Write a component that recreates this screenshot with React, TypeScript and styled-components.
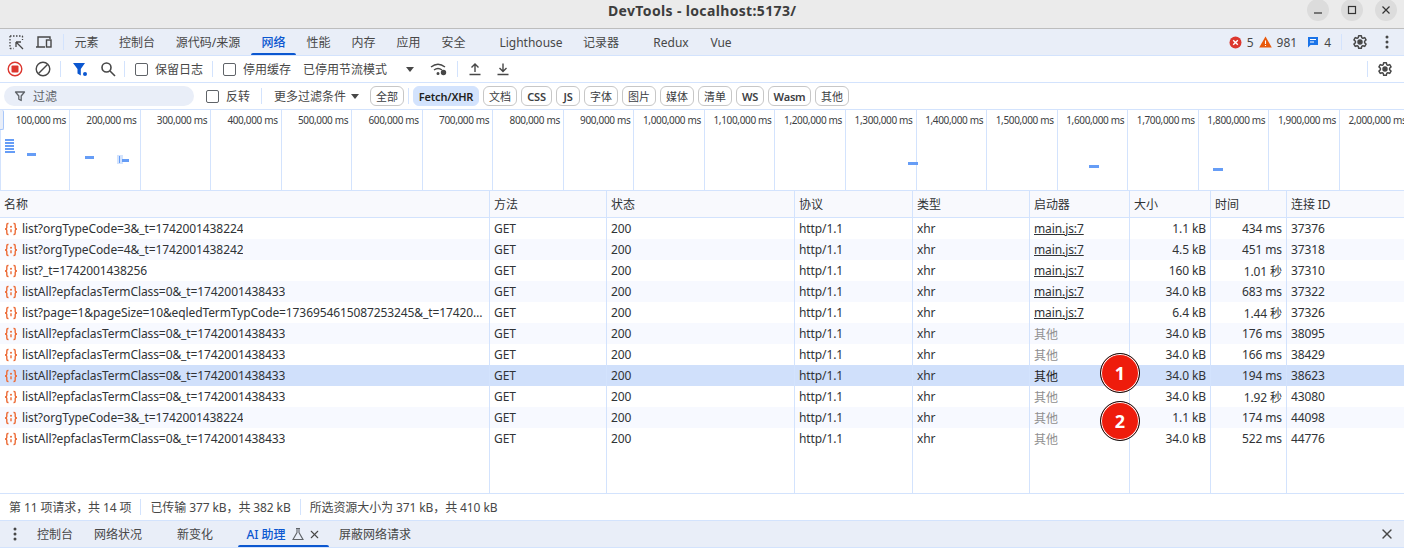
import React from 'react';
import styled, { createGlobalStyle } from 'styled-components';
import { X } from 'lucide-react';

const GlobalStyle = createGlobalStyle`
  html, body {
    margin: 0;
    padding: 0;
    background: #fff;
  }
  body {
    font-family: "Noto Sans", "Noto Sans CJK SC", sans-serif;
    font-size: 12px;
    color: #3c4043;
    overflow: hidden;
  }
`;

const COLUMNS = '490px 117px 188px 118px 117px 100px 81px 76px 1fr';
const LINE = '#d3e3fd';

const Window = styled.div`
  position: relative;
  width: 1404px;
  height: 551px;
  padding-bottom: 3px;
  box-sizing: border-box;
  display: flex;
  flex-direction: column;
  background: #fff;
  overflow: hidden;
`;

const TitleBar = styled.header`
  height: 28px;
  flex: none;
  display: flex;
  align-items: center;
  justify-content: flex-end;
  padding-right: 7px;
  gap: 12px;
  background: #ebebeb;
  border-bottom: 1px solid #bdbdbd;
  position: relative;
`;

const Title = styled.div`
  position: absolute;
  left: 608px;
  top: 1px;
  font-size: 14px;
  font-weight: 700;
  color: #3d3d3d;
  line-height: 20px;
  letter-spacing: 0.35px;
`;

const WinButton = styled.div`
  width: 22px;
  height: 22px;
  margin-top: -9px;
  border-radius: 50%;
  background: #dcdcdc;
  display: flex;
  align-items: center;
  justify-content: center;
  color: #333;
`;

const Bar = styled.div<{ $bg?: string }>`
  height: 26px;
  flex: none;
  display: flex;
  align-items: center;
  background: ${(p) => p.$bg ?? '#fff'};
  border-bottom: 1px solid ${LINE};
  white-space: nowrap;
`;

const StatusBar = styled(Bar)`
  border-top: 1px solid ${LINE};
  letter-spacing: -0.1px;
`;

const Spacer = styled.div`
  flex: 1;
`;

const IconSlot = styled.div<{ $ml?: number; $w?: number }>`
  width: ${(p) => p.$w ?? 20}px;
  height: 20px;
  margin-left: ${(p) => p.$ml ?? 0}px;
  flex: none;
  display: flex;
  align-items: center;
  justify-content: center;
`;

const Sep = styled.div<{ $ml?: number }>`
  width: 1px;
  height: 16px;
  flex: none;
  margin-left: ${(p) => p.$ml ?? 0}px;
  background: ${LINE};
`;

const Tab = styled.div<{ $active?: boolean; $w: number; $ml?: number }>`
  position: relative;
  width: ${(p) => p.$w}px;
  margin-left: ${(p) => p.$ml ?? 0}px;
  flex: none;
  height: 100%;
  display: flex;
  align-items: center;
  justify-content: center;
  color: ${(p) => (p.$active ? '#0b57d0' : '#474747')};
  font-weight: ${(p) => (p.$active ? 500 : 400)};
  &::after {
    content: '';
    display: ${(p) => (p.$active ? 'block' : 'none')};
    position: absolute;
    left: 0;
    right: 0;
    bottom: 0;
    height: 2px;
    border-radius: 2px 2px 0 0;
    background: #0b57d0;
  }
`;

const Count = styled.span`
  margin-left: 4px;
  color: #474747;
`;

const CheckBox = styled.span<{ $ml?: number }>`
  display: block;
  width: 11px;
  height: 11px;
  flex: none;
  margin-left: ${(p) => p.$ml ?? 0}px;
  border: 1px solid #5f6368;
  border-radius: 2px;
`;

const Label = styled.span<{ $ml?: number }>`
  margin-left: ${(p) => p.$ml ?? 0}px;
  color: #474747;
  flex: none;
`;

const FilterInput = styled.div`
  width: 190px;
  height: 20px;
  margin-left: 4px;
  flex: none;
  display: flex;
  align-items: center;
  padding-left: 10px;
  box-sizing: border-box;
  gap: 7px;
  border-radius: 10px;
  background: #e9eef8;
  color: #5f6368;
`;

const Chips = styled.div`
  display: flex;
  align-items: center;
  gap: 4px;
  margin-left: 9px;
`;

const Chip = styled.div<{ $active?: boolean; $w: number; $bold?: boolean }>`
  box-sizing: border-box;
  width: ${(p) => p.$w}px;
  height: 20px;
  flex: none;
  display: flex;
  align-items: center;
  justify-content: center;
  border-radius: 6px;
  font-size: 11px;
  font-weight: ${(p) => (p.$bold ? 600 : 400)};
  letter-spacing: ${(p) => (p.$bold ? '-0.2px' : '0')};
  color: ${(p) => (p.$active ? '#1f1f1f' : '#3c4043')};
  background: ${(p) => (p.$active ? '#d3e3fd' : '#fff')};
  border: 1px solid ${(p) => (p.$active ? '#d3e3fd' : '#c7c7c7')};
`;

const Overview = styled.div`
  position: relative;
  height: 80px;
  flex: none;
  display: flex;
  border-bottom: 1px solid ${LINE};
  overflow: hidden;
`;

const Tick = styled.div`
  width: 70.55px;
  flex: none;
  box-sizing: border-box;
  height: 100%;
  padding: 2px 3px 0 0;
  border-right: 1px solid ${LINE};
  text-align: right;
  font-size: 10px;
  letter-spacing: -0.35px;
  line-height: 16px;
  color: #3c4043;
  white-space: nowrap;
  &:first-child {
    border-left: 1px solid ${LINE};
    width: 70px;
  }
`;

const Mark = styled.div<{ $x: number; $y: number; $w: number; $h?: number; $pale?: boolean }>`
  position: absolute;
  left: ${(p) => p.$x}px;
  top: ${(p) => p.$y}px;
  width: ${(p) => p.$w}px;
  height: ${(p) => p.$h ?? 3}px;
  background: ${(p) => (p.$pale ? '#d3e3fd' : '#669df6')};
`;

const Grip = styled.div`
  position: absolute;
  left: 0;
  top: 0;
  width: 3px;
  height: 19px;
  border-radius: 0 2px 2px 0;
  border-right: 1px solid #a8c7fa;
  border-bottom: 1px solid #a8c7fa;
  background: #e9eef8;
`;

const TableRow = styled.div<{ $kind?: 'odd' | 'even' | 'selected' }>`
  display: grid;
  grid-template-columns: ${COLUMNS};
  height: 21px;
  flex: none;
  background: ${(p) =>
    p.$kind === 'selected' ? '#d0e0fb' : p.$kind === 'even' ? '#f7f9ff' : '#fff'};
`;

const HeaderRow = styled(TableRow)`
  height: 26px;
  background: #f8f9fd;
  border-bottom: 1px solid ${LINE};
`;

const Filler = styled(TableRow)`
  flex: 1;
  height: auto;
`;

const Cell = styled.div<{ $right?: boolean; $dim?: boolean; $link?: boolean; $strong?: boolean }>`
  min-width: 0;
  display: flex;
  align-items: center;
  justify-content: ${(p) => (p.$right ? 'flex-end' : 'flex-start')};
  padding: 0 4px;
  box-sizing: border-box;
  border-right: 1px solid ${LINE};
  color: ${(p) => (p.$dim ? '#8f8f8f' : p.$strong ? '#1f1f1f' : '#303336')};
  text-decoration: ${(p) => (p.$link ? 'underline' : 'none')};
  letter-spacing: -0.1px;
  white-space: nowrap;
  overflow: hidden;
  &:last-child {
    border-right: none;
  }
`;

const NameText = styled.span`
  margin-left: 4px;
  min-width: 0;
  overflow: hidden;
  text-overflow: ellipsis;
`;

const Body = styled.div`
  flex: 1;
  min-height: 0;
  display: flex;
  flex-direction: column;
`;

const StatusItem = styled.div<{ $first?: boolean }>`
  height: 16px;
  display: flex;
  align-items: center;
  padding: 0 9px;
  color: #474747;
  border-left: ${(p) => (p.$first ? 'none' : `1px solid ${LINE}`)};
`;

const Badge = styled.div<{ $top: number }>`
  position: absolute;
  left: 1100px;
  top: ${(p) => p.$top}px;
  width: 40px;
  height: 40px;
  box-sizing: border-box;
  border-radius: 50%;
  background: #ee1c0c;
  border: 1px solid #111;
  box-shadow: inset 0 0 0 1px #fff;
  color: #fff;
  font-size: 18px;
  font-weight: 700;
  display: flex;
  align-items: center;
  justify-content: center;
`;

const FetchSvg = styled.svg`
  flex: none;
`;

const FlaskSvg = styled.svg`
  margin-left: 5px;
`;

const TabClose = styled(X)`
  margin-left: 3px;
`;

const Gear = ({ size = 16 }: { size?: number }) => (
  <svg width={size} height={size} viewBox="0 0 24 24" fill="none" stroke="#474747" strokeWidth="2.2">
    <path d="M10 2.500h4l.6 2.900 1.700 1 2.800-1 2 3.400-2.200 2v2.400l2.200 2-2 3.400-2.800-1-1.700 1-.6 2.900h-4l-.6-2.900-1.700-1-2.800 1-2-3.400 2.200-2v-2.400l-2.200-2 2-3.400 2.800 1 1.700-1z" strokeLinejoin="round" />
    <circle cx="12" cy="12" r="3" fill="#474747" />
  </svg>
);

const Dots = () => (
  <svg width="4" height="14" viewBox="0 0 4 14" fill="#474747">
    <circle cx="2" cy="2" r="1.500" />
    <circle cx="2" cy="7" r="1.500" />
    <circle cx="2" cy="12" r="1.500" />
  </svg>
);

const FetchIcon = () => (
  <FetchSvg width="14" height="14" viewBox="0 0 14 14" fill="none">
    <path d="M4.500 1.500H4Q2.800 1.500 2.800 3v2.500Q2.800 7 1 7q1.800 0 1.800 1.500V11q0 1.500 1.200 1.500h.5M9.500 1.500h.5q1.200 0 1.200 1.500v2.500Q11.200 7 13 7q-1.800 0-1.800 1.500V11q0 1.500-1.200 1.500h-.5" stroke="#ec6a35" strokeWidth="1.400" />
    <circle cx="7" cy="4.800" r="1" fill="#ec6a35" />
    <path d="M7 7.200v3" stroke="#ec6a35" strokeWidth="1.400" />
  </FetchSvg>
);

const FunnelOutline = () => (
  <svg width="12" height="12" viewBox="0 0 12 12" fill="none" stroke="#5f6368" strokeWidth="1.300">
    <path d="M1.500 2h9L7.200 6v4.500L4.800 9.200V6z" strokeLinejoin="round" />
  </svg>
);

const Caret = () => (
  <svg width="8" height="5" viewBox="0 0 8 5"><path d="M0 0h8L4 5z" fill="#474747" /></svg>
);

const ticks = [
  '100,000', '200,000', '300,000', '400,000', '500,000', '600,000', '700,000', '800,000', '900,000', '1,000,000',
  '1,100,000', '1,200,000', '1,300,000', '1,400,000', '1,500,000', '1,600,000', '1,700,000', '1,800,000', '1,900,000', '2,000,000',
];

const ALL = 'listAll?epfaclasTermClass=0&_t=1742001438433';
const rows = [
  { name: 'list?orgTypeCode=3&_t=1742001438224', init: 'main.js:7', size: '1.1 kB', time: '434 ms', id: '37376' },
  { name: 'list?orgTypeCode=4&_t=1742001438242', init: 'main.js:7', size: '4.5 kB', time: '451 ms', id: '37318' },
  { name: 'list?_t=1742001438256', init: 'main.js:7', size: '160 kB', time: '1.01 秒', id: '37310' },
  { name: ALL, init: 'main.js:7', size: '34.0 kB', time: '683 ms', id: '37322' },
  { name: 'list?page=1&pageSize=10&eqledTermTypCode=1736954615087253245&_t=1742001438433', init: 'main.js:7', size: '6.4 kB', time: '1.44 秒', id: '37326' },
  { name: ALL, init: '其他', size: '34.0 kB', time: '176 ms', id: '38095' },
  { name: ALL, init: '其他', size: '34.0 kB', time: '166 ms', id: '38429' },
  { name: ALL, init: '其他', size: '34.0 kB', time: '194 ms', id: '38623', selected: true },
  { name: ALL, init: '其他', size: '34.0 kB', time: '1.92 秒', id: '43080' },
  { name: 'list?orgTypeCode=3&_t=1742001438224', init: '其他', size: '1.1 kB', time: '174 ms', id: '44098' },
  { name: ALL, init: '其他', size: '34.0 kB', time: '522 ms', id: '44776' },
];

const chips = [
  { t: '文档', w: 34 }, { t: 'CSS', w: 31, b: true }, { t: 'JS', w: 24, b: true }, { t: '字体', w: 34 },
  { t: '图片', w: 34 }, { t: '媒体', w: 34 }, { t: '清单', w: 34 }, { t: 'WS', w: 28, b: true },
  { t: 'Wasm', w: 43, b: true }, { t: '其他', w: 34 },
];

const headers = ['名称', '方法', '状态', '协议', '类型', '启动器', '大小', '时间', '连接 ID'];

export default function App() {
  return (
    <Window>
      <GlobalStyle />
      <TitleBar>
        <Title>DevTools - localhost:5173/</Title>
        <WinButton>
          <svg width="10" height="10" viewBox="0 0 10 10"><path d="M1 8h8" stroke="#333" strokeWidth="1.200" /></svg>
        </WinButton>
        <WinButton>
          <svg width="10" height="10" viewBox="0 0 10 10" fill="none"><rect x="1.500" y="1.500" width="7" height="7" stroke="#333" strokeWidth="1.200" /></svg>
        </WinButton>
        <WinButton>
          <svg width="10" height="10" viewBox="0 0 10 10"><path d="M1.500 1.500l7 7M8.500 1.500l-7 7" stroke="#333" strokeWidth="1.200" /></svg>
        </WinButton>
      </TitleBar>

      <Bar $bg="#e9eef8">
        <IconSlot $ml={6}>
          <svg width="15" height="15" viewBox="0 0 15 15" fill="none" stroke="#474747" strokeWidth="1.300">
            <path d="M1 1h12.500M1 1v12.500M1 13.500h3.500M13.500 1v4" strokeDasharray="1.500 1.500" />
            <path d="M7 7h5M7 7v5M7 7l7 7" />
          </svg>
        </IconSlot>
        <IconSlot $ml={8}>
          <svg width="18" height="16" viewBox="0 0 18 16" fill="none" stroke="#474747" strokeWidth="1.400">
            <path d="M1 13h9M3 13V3h12v2" />
            <rect x="11.500" y="6" width="4.500" height="7" />
          </svg>
        </IconSlot>
        <Sep $ml={9} />
        <Tab $w={45}>元素</Tab>
        <Tab $w={56}>控制台</Tab>
        <Tab $w={86}>源代码/来源</Tab>
        <Tab $w={45} $active>网络</Tab>
        <Tab $w={45}>性能</Tab>
        <Tab $w={45}>内存</Tab>
        <Tab $w={45}>应用</Tab>
        <Tab $w={45}>安全</Tab>
        <Tab $w={82} $ml={14}>Lighthouse</Tab>
        <Tab $w={58}>记录器</Tab>
        <Tab $w={82}>Redux</Tab>
        <Tab $w={18}>Vue</Tab>
        <Spacer />
        <IconSlot $w={14}>
          <svg width="13" height="13" viewBox="0 0 13 13">
            <circle cx="6.500" cy="6.500" r="6" fill="#dc362e" />
            <path d="M4.200 4.200l4.600 4.600M8.800 4.200l-4.600 4.600" stroke="#fff" strokeWidth="1.400" />
          </svg>
        </IconSlot>
        <Count>5</Count>
        <IconSlot $ml={5} $w={14}>
          <svg width="13" height="12" viewBox="0 0 13 12">
            <path d="M6.500 0.500L12.800 11.500H0.200z" fill="#e8590c" />
            <path d="M6.500 4.500v3.500M6.500 9v1" stroke="#fff" strokeWidth="1.100" />
          </svg>
        </IconSlot>
        <Count>981</Count>
        <IconSlot $ml={9} $w={14}>
          <svg width="12" height="12" viewBox="0 0 12 12">
            <path d="M1 1h10v8H3.500L1 11.500z" fill="#1a73e8" />
            <path d="M3 3.500h6M3 6h4" stroke="#fff" strokeWidth="1" />
          </svg>
        </IconSlot>
        <Count>4</Count>
        <Sep $ml={10} />
        <IconSlot $ml={8}><Gear /></IconSlot>
        <IconSlot $ml={7}><Dots /></IconSlot>
        <IconSlot $w={7} />
      </Bar>

      <Bar>
        <IconSlot $ml={5}>
          <svg width="16" height="16" viewBox="0 0 16 16">
            <circle cx="8" cy="8" r="6.800" fill="none" stroke="#dc362e" strokeWidth="1.400" />
            <rect x="4.500" y="4.500" width="7" height="7" rx="1" fill="#dc362e" />
          </svg>
        </IconSlot>
        <IconSlot $ml={8}>
          <svg width="16" height="16" viewBox="0 0 16 16" fill="none" stroke="#474747" strokeWidth="1.400">
            <circle cx="8" cy="8" r="6.800" />
            <path d="M3.500 12.500l9-9" />
          </svg>
        </IconSlot>
        <Sep $ml={7} />
        <IconSlot $ml={9}>
          <svg width="16" height="15" viewBox="0 0 16 15">
            <path d="M1 1h12L8.800 7v6.500L5.500 11.500V7z" fill="#0b57d0" />
            <circle cx="13" cy="12" r="2" fill="#0b57d0" />
          </svg>
        </IconSlot>
        <IconSlot $ml={8}>
          <svg width="16" height="16" viewBox="0 0 16 16" fill="none" stroke="#474747" strokeWidth="1.600">
            <circle cx="6.500" cy="6.500" r="4.500" />
            <path d="M10 10l5 5" />
          </svg>
        </IconSlot>
        <Sep $ml={6} />
        <CheckBox $ml={10} />
        <Label $ml={7}>保留日志</Label>
        <Sep $ml={9} />
        <CheckBox $ml={10} />
        <Label $ml={7}>停用缓存</Label>
        <Label $ml={12}>已停用节流模式</Label>
        <IconSlot $ml={17} $w={12}><Caret /></IconSlot>
        <IconSlot $ml={13}>
          <svg width="18" height="14" viewBox="0 0 18 14" fill="none" stroke="#474747" strokeWidth="1.400">
            <path d="M1 5q7-5.500 14 0M4 8q4-3 8 0" />
            <circle cx="13.500" cy="10.500" r="2" fill="#474747" />
            <circle cx="8" cy="11.500" r="0.800" fill="#474747" />
          </svg>
        </IconSlot>
        <Sep $ml={8} />
        <IconSlot $ml={7}>
          <svg width="14" height="14" viewBox="0 0 14 14" fill="none" stroke="#474747" strokeWidth="1.400">
            <path d="M7 10V2M3.500 5.500L7 2l3.500 3.500M1.500 12.500h11" />
          </svg>
        </IconSlot>
        <IconSlot $ml={8}>
          <svg width="14" height="14" viewBox="0 0 14 14" fill="none" stroke="#474747" strokeWidth="1.400">
            <path d="M7 1.500v8M3.500 6L7 9.500 10.500 6M1.500 12.500h11" />
          </svg>
        </IconSlot>
        <Spacer />
        <Sep />
        <IconSlot $ml={7}><Gear /></IconSlot>
        <IconSlot $w={9} />
      </Bar>

      <Bar>
        <FilterInput>
          <FunnelOutline />
          <span>过滤</span>
        </FilterInput>
        <CheckBox $ml={12} />
        <Label $ml={7}>反转</Label>
        <Sep $ml={11} />
        <Label $ml={12}>更多过滤条件</Label>
        <IconSlot $ml={3} $w={12}><Caret /></IconSlot>
        <Chips>
          <Chip $w={34}>全部</Chip>
          <Sep />
          <Chip $w={66} $active $bold>Fetch/XHR</Chip>
          {chips.map((c) => (
            <Chip key={c.t} $w={c.w} $bold={c.b}>{c.t}</Chip>
          ))}
        </Chips>
      </Bar>

      <Overview>
        {ticks.map((t) => (
          <Tick key={t}>{t} ms</Tick>
        ))}
        <Grip />
        <Mark $x={5} $y={29} $w={9} $h={2} />
        <Mark $x={5} $y={32} $w={9} $h={2} />
        <Mark $x={5} $y={35} $w={9} $h={2} />
        <Mark $x={5} $y={38} $w={9} $h={2} />
        <Mark $x={5} $y={41} $w={10} $h={2} />
        <Mark $x={27} $y={43} $w={9} />
        <Mark $x={85} $y={46} $w={9} />
        <Mark $x={117} $y={45} $w={6} $h={9} $pale />
        <Mark $x={119} $y={46} $w={1} $h={7} />
        <Mark $x={122} $y={49} $w={7} />
        <Mark $x={908} $y={52} $w={10} />
        <Mark $x={1089} $y={55} $w={10} />
        <Mark $x={1213} $y={58} $w={10} />
      </Overview>

      <HeaderRow>
        {headers.map((h) => (
          <Cell key={h}>{h}</Cell>
        ))}
      </HeaderRow>

      <Body>
        {rows.map((r, i) => (
          <TableRow key={i} $kind={r.selected ? 'selected' : i % 2 ? 'even' : 'odd'}>
            <Cell>
              <FetchIcon />
              <NameText>{r.name}</NameText>
            </Cell>
            <Cell>GET</Cell>
            <Cell>200</Cell>
            <Cell>http/1.1</Cell>
            <Cell>xhr</Cell>
            <Cell $link={r.init !== '其他'} $dim={r.init === '其他' && !r.selected} $strong={r.selected}>
              {r.init}
            </Cell>
            <Cell $right>{r.size}</Cell>
            <Cell $right>{r.time}</Cell>
            <Cell>{r.id}</Cell>
          </TableRow>
        ))}
        <Filler>
          {headers.map((h) => (
            <Cell key={h} />
          ))}
        </Filler>
      </Body>

      <StatusBar>
        <StatusItem $first>第 11 项请求，共 14 项</StatusItem>
        <StatusItem>已传输 377 kB，共 382 kB</StatusItem>
        <StatusItem>所选资源大小为 371 kB，共 410 kB</StatusItem>
      </StatusBar>

      <Bar $bg="#e9eef8">
        <IconSlot $ml={5}><Dots /></IconSlot>
        <Tab $w={58} $ml={1}>控制台</Tab>
        <Tab $w={68}>网络状况</Tab>
        <Tab $w={86}>新变化</Tab>
        <Tab $w={91} $active>
          <span>AI 助理</span>
          <FlaskSvg width="14" height="14" viewBox="0 0 14 14" fill="none" stroke="#5f6368" strokeWidth="1.100">
            <path d="M5 1.500h4M6 1.500v4L2 12.500h10L8 5.500v-4" />
          </FlaskSvg>
          <TabClose size={13} color="#474747" />
        </Tab>
        <Tab $w={92}>屏蔽网络请求</Tab>
        <Spacer />
        <IconSlot>
          <X size={16} color="#474747" />
        </IconSlot>
        <IconSlot $w={7} />
      </Bar>

      <Badge $top={353}>1</Badge>
      <Badge $top={401}>2</Badge>
    </Window>
  );
}
